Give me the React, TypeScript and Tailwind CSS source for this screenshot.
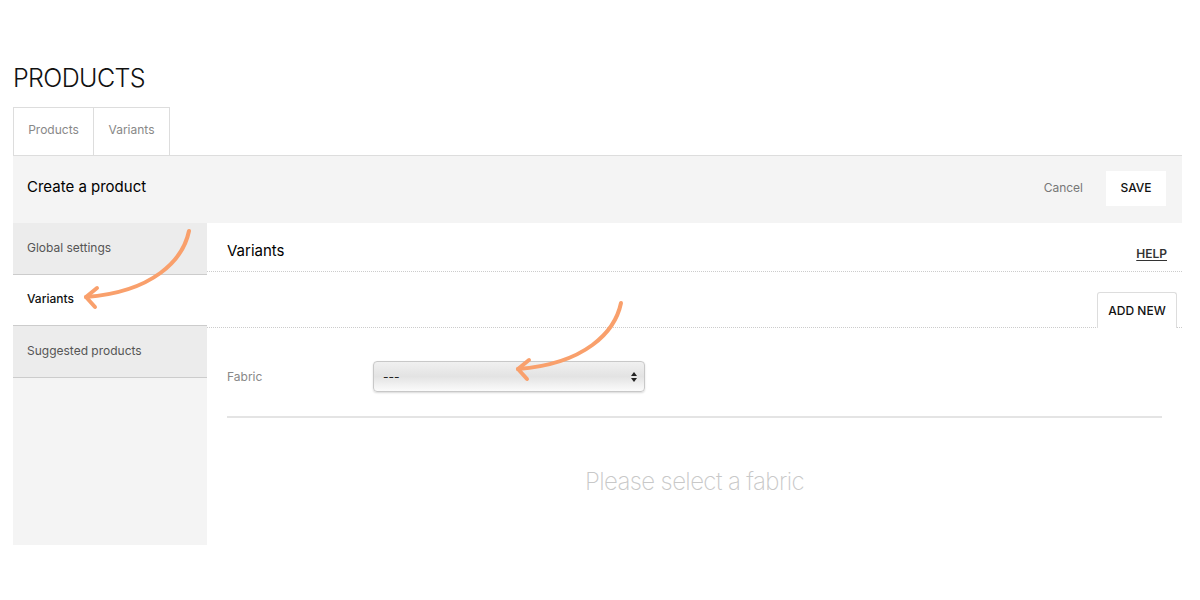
import React from "react";

function Arrow({ className }: { className: string }) {
  return (
    <svg
      className={className}
      width="120"
      height="90"
      viewBox="0 0 120 90"
      fill="none"
      stroke="#F9A06C"
      strokeWidth="4"
      strokeLinecap="round"
      strokeLinejoin="round"
    >
      <path d="M106 11 C 100 40, 70 72, 3 77" />
      <path d="M14 68 L3 77 L12 87" />
    </svg>
  );
}

export default function App() {
  return (
    <div
      className="relative w-[1200px] h-[600px] bg-white text-[#222] overflow-hidden"
      style={{ fontFamily: "Inter, 'Noto Sans', sans-serif" }}
    >
      <div className="ml-[13px] w-[1169px] pt-[62px]">
        <h1 className="text-[25px] leading-[32px] font-light tracking-[-0.6px] text-[#111] h-[45px]">
          PRODUCTS
        </h1>
        <div className="flex h-[48px]">
          <div className="w-[81px] pb-[4px] border border-b-0 border-[#ddd] flex items-center justify-center text-[12px] text-[#888]">
            Products
          </div>
          <div className="w-[76px] pb-[4px] border border-l-0 border-b-0 border-[#ddd] flex items-center justify-center text-[12px] text-[#888]">
            Variants
          </div>
        </div>
        <div className="h-[68px] bg-[#f4f4f4] border-t border-[#ddd] flex items-center pl-[14px] pr-[16px]">
          <div className="text-[15px] font-normal text-[#000] mb-[4px]">Create a product</div>
          <div className="ml-auto flex items-center">
            <span className="text-[12px] text-[#777] mr-[23px] mb-[4px]">Cancel</span>
            <button className="w-[60px] h-[35px] bg-white text-[12px] font-medium text-[#111] mb-[2px] pb-[2px]">SAVE</button>
          </div>
        </div>
        <div className="flex">
          <div className="w-[194px] h-[322px] bg-[#f4f4f4] flex flex-col">
            <div className="h-[52px] bg-[#ececec] border-b border-[#ccc] flex items-center pl-[14px] pb-[2px] text-[12px] text-[#555]">
              Global settings
            </div>
            <div className="h-[51px] bg-white border-b border-[#ccc] flex items-center pl-[14px] pb-[2px] text-[12px] font-medium text-[#111]">
              Variants
            </div>
            <div className="h-[52px] bg-[#ececec] border-b border-[#ccc] flex items-center pl-[14px] pb-[2px] text-[12px] text-[#555]">
              Suggested products
            </div>
          </div>
          <div className="flex-1 bg-white">
            <div className="h-[49px] pt-[8px] border-b border-dotted border-[#ccc] flex items-center pl-[20px] pr-[15px]">
              <div className="text-[15px] font-normal text-[#000]">Variants</div>
              <div className="ml-auto text-[12px] font-semibold text-[#333] underline underline-offset-2 mt-[5px]">HELP</div>
            </div>
            <div className="h-[56px] border-b border-dotted border-[#ccc] flex items-end justify-end pr-[5px]">
              <div className="w-[80px] h-[36px] -mb-px bg-white border border-b-0 border-[#ddd] rounded-t-[3px] flex items-center justify-center text-[12px] font-medium text-[#111]">
                ADD NEW
              </div>
            </div>
            <div className="px-[20px]">
              <div className="h-[90px] pt-[33px] border-b-2 border-[#e4e4e4] flex items-start">
                <div className="w-[146px] h-[31px] flex items-center text-[12px] text-[#888]">Fabric</div>
                <div className="w-[272px] h-[31px] rounded-[4px] border border-[#c8c8c8] shadow-[0_1px_2px_rgba(0,0,0,0.15)] bg-gradient-to-b from-[#f0f0f0] via-[#e3e3e3] to-[#fbfbfb] flex items-center pl-[9px] pr-[6px] text-[12px] text-[#222]">
                  <span>---</span>
                  <svg className="ml-auto" width="8" height="12" viewBox="0 0 8 12">
                    <path d="M4 1 L7 5 L1 5 Z" fill="#222" />
                    <path d="M1 7 L7 7 L4 11 Z" fill="#222" />
                  </svg>
                </div>
              </div>
            </div>
            <div className="h-[127px] flex items-center justify-center">
              <div className="text-[24px] font-extralight tracking-[-0.6px] text-[#c8c8c8]">Please select a fabric</div>
            </div>
          </div>
        </div>
      </div>
      <Arrow className="absolute left-[83px] top-[220px] pointer-events-none" />
      <Arrow className="absolute left-[515px] top-[292px] pointer-events-none" />
    </div>
  );
}
